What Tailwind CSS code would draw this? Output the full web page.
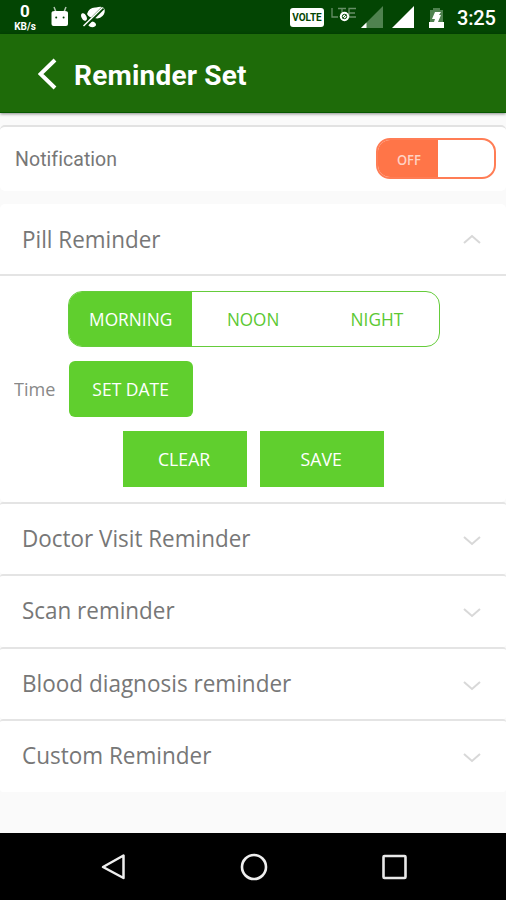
<!DOCTYPE html>
<html lang="en">
<head>
<meta charset="utf-8">
<title>Reminder Set</title>
<script src="https://cdn.jsdelivr.net/npm/@tailwindcss/browser@4"></script>
</head>
<body class="w-[506px] h-[900px] overflow-hidden bg-[#fafafa] flex flex-col font-['Open_Sans','Noto_Sans',sans-serif] text-[#777]">
  <!-- status bar -->
  <header class="h-[34px] shrink-0 bg-[#034503] flex items-center justify-between text-white font-[Roboto,sans-serif] pl-[12px] pr-[10px]">
    <div class="flex items-center">
      <div class="w-[26px] flex flex-col items-center font-bold">
        <span class="text-[17px] leading-[20px] font-bold">0</span>
        <span class="text-[10px] leading-[12px]">KB/s</span>
      </div>
      <svg class="ml-[12px]" width="20" height="22" viewBox="0 0 20 22"><path d="M4 1l2 5M16 1l-2 5" stroke="#fff" stroke-opacity=".7" stroke-width="1.5"/><path d="M1.500 7q0-2 3-2h10.500q3 0 3 2v11q0 2-2 2H3.500q-2 0-2-2z" fill="#fff"/><circle cx="6.200" cy="11.500" r="1" fill="#034503"/><circle cx="13.600" cy="11.500" r="1" fill="#034503"/></svg>
      <svg class="ml-[11px]" width="26" height="24" viewBox="0 0 26 24" fill="#fff"><path d="M6 9Q8 2 15 2.500q7-2 8.500 1.500 1 4-2 7-3 3.500-8 2Q8 13 6 9z"/><ellipse cx="3" cy="12" rx="2.500" ry="4" transform="rotate(-25 3 12)"/><path d="M7 20q3-5 6-3 3 2 1.500 4-4 3-7.500-1z"/><path d="M22 3L3 22" stroke="#034503" stroke-width="3.600"/><path d="M21.500 2.500L2.500 21" stroke="#fff" stroke-width="1.500"/></svg>
    </div>
    <div class="flex items-center">
      <div class="w-[34px] h-[19px] rounded-[3px] bg-white text-[#034503] text-[10px] leading-[19px] font-bold text-center">VOLTE</div>
      <svg class="ml-[7px]" width="26" height="24" viewBox="0 0 26 24"><path d="M1 3v9h6M7 3.500h8M11 3.500v9M25 3.500h-7v8.500h7M18 8h6" fill="none" stroke="#fff" stroke-opacity=".4" stroke-width="1.300"/><circle cx="13.500" cy="11.500" r="4.700" fill="#fff"/><circle cx="13.500" cy="11.500" r="2.200" stroke="#034503" stroke-width="1" fill="none"/><path d="M11.500 13.500l4-4" stroke="#034503" stroke-width=".8"/></svg>
      <svg class="ml-[4px]" width="22" height="22" viewBox="0 0 22 22"><path d="M22 0v22H0z" fill="#4f824f"/><path d="M5.500 16.500v5.500H0z" fill="#fff"/></svg>
      <svg class="ml-[9px]" width="22" height="22" viewBox="0 0 22 22"><path d="M22 0v22H0z" fill="#fff"/></svg>
      <svg class="ml-[15px]" width="15" height="21" viewBox="0 0 15 21"><path d="M1 3h3V1h7v2h3v13H1z" fill="#4f824f"/><path d="M0 15h5l1-3H3l3-7h6l-2 3h2l-3 7h6v6H0z" fill="#fff"/></svg>
      <span class="ml-[13px] w-[39px] text-[20px] leading-[34px] font-medium tracking-[-0.2px] whitespace-nowrap pt-[2px]">3:25</span>
    </div>
  </header>
  <!-- title bar -->
  <div class="h-[79px] shrink-0 bg-[#1e6b09] border-b border-[#075800] shadow-[0_1px_3px_rgba(0,0,0,0.45)] flex items-center pl-[38px] text-white font-[Roboto,sans-serif]">
    <svg class="mt-[2px]" width="19" height="32" viewBox="0 0 19 32"><path d="M17 2L2.500 16 17 30" fill="none" stroke="#fff" stroke-width="4"/></svg>
    <h1 class="ml-[17px] mt-[5px] text-[28px] leading-[32px] font-bold tracking-[0.2px] whitespace-nowrap">Reminder Set</h1>
  </div>
  <main class="flex flex-col h-[720px] shrink-0 pt-[12px]">
    <section class="h-[66px] shrink-0 bg-white rounded-[5px] border-t-2 border-[#e2e2e2] flex items-center justify-between pl-[15px] pr-[10px]">
      <span class="font-[Roboto,sans-serif] text-[19.5px] tracking-[0.05px] whitespace-nowrap pt-[1px]">Notification</span>
      <div class="w-[120px] h-[41px] mt-[-1px] rounded-[14px] border-2 border-[#ff7d55] overflow-hidden flex bg-white">
        <div class="w-[60px] bg-[#ff7548] text-[#ffd2c3] text-[15px] leading-[38px] text-center pl-[2px] font-semibold"><span class="inline-block scale-x-[0.86]">OFF</span></div>
      </div>
    </section>
    <section class="mt-[13px] flex flex-col bg-white rounded-[5px]">
      <div class="h-[72px] border-b-2 border-[#e4e4e4] flex items-center justify-between pl-[22px] pr-[25px]">
        <span class="text-[24px] origin-left scale-x-[0.935] whitespace-nowrap">Pill Reminder</span>
        <svg width="18" height="10" viewBox="0 0 18 10"><path d="M1 9l8-7 8 7" fill="none" stroke="#d8d8d8" stroke-width="2"/></svg>
      </div>
      <div class="h-[226px] pt-[15px] flex flex-col">
        <div class="ml-[68px] w-[372px] h-[56px] rounded-[14px] border-[1.5px] border-[#65cc3b] overflow-hidden flex text-[19px] leading-[54px] text-center text-[#5bc832]">
          <div class="w-[123px] bg-[#60cf2e] text-white"><span class="inline-block scale-x-[0.91]">MORNING</span></div>
          <div class="w-[124px]"><span class="inline-block scale-x-[0.9]">NOON</span></div>
          <div class="w-[124px]"><span class="inline-block scale-x-[0.91]">NIGHT</span></div>
        </div>
        <div class="mt-[14px] flex items-center pl-[14px]">
          <span class="w-[55px] text-[19px] origin-left scale-x-[0.95] text-[#888]">Time</span>
          <div class="w-[124px] h-[56px] rounded-[6px] bg-[#60cf2e] text-white text-[19px] leading-[57px] text-center"><span class="inline-block scale-x-[0.92]">SET DATE</span></div>
        </div>
        <div class="mt-[14px] flex gap-[13px] justify-center text-white text-[19px] leading-[57px] text-center">
          <div class="w-[124px] h-[56px] bg-[#60cf2e]"><span class="inline-block scale-x-[0.93]">CLEAR</span></div>
          <div class="w-[124px] h-[56px] bg-[#60cf2e]"><span class="inline-block scale-x-[0.93]">SAVE</span></div>
        </div>
      </div>
    </section>
    <section class="flex flex-col">
      <div class="h-[72px] bg-white border-t-2 border-[#e4e4e4] rounded-[3px] flex items-center justify-between pl-[22px] pr-[25px]">
        <span class="text-[24px] mt-[-2px] origin-left scale-x-[0.935] whitespace-nowrap">Doctor Visit Reminder</span>
        <svg class="mt-[4px]" width="18" height="10" viewBox="0 0 18 10"><path d="M1 1l8 7 8-7" fill="none" stroke="#d8d8d8" stroke-width="2"/></svg>
      </div>
      <div class="h-[73px] bg-white border-t-2 border-[#e4e4e4] rounded-[3px] flex items-center justify-between pl-[22px] pr-[25px]">
        <span class="text-[24px] mt-[-3px] origin-left scale-x-[0.935] whitespace-nowrap">Scan reminder</span>
        <svg class="mt-[3px]" width="18" height="10" viewBox="0 0 18 10"><path d="M1 1l8 7 8-7" fill="none" stroke="#d8d8d8" stroke-width="2"/></svg>
      </div>
      <div class="h-[72px] bg-white border-t-2 border-[#e4e4e4] rounded-[3px] flex items-center justify-between pl-[22px] pr-[25px]">
        <span class="text-[24px] mt-[-2px] origin-left scale-x-[0.938] whitespace-nowrap">Blood diagnosis reminder</span>
        <svg class="mt-[4px]" width="18" height="10" viewBox="0 0 18 10"><path d="M1 1l8 7 8-7" fill="none" stroke="#d8d8d8" stroke-width="2"/></svg>
      </div>
      <div class="h-[73px] bg-white border-t-2 border-[#e4e4e4] rounded-[3px] flex items-center justify-between pl-[22px] pr-[25px]">
        <span class="text-[24px] mt-[-3px] origin-left scale-x-[0.938] whitespace-nowrap">Custom Reminder</span>
        <svg class="mt-[3px]" width="18" height="10" viewBox="0 0 18 10"><path d="M1 1l8 7 8-7" fill="none" stroke="#d8d8d8" stroke-width="2"/></svg>
      </div>
    </section>
  </main>
  <!-- navigation bar -->
  <nav class="h-[67px] shrink-0 bg-black flex items-center justify-between pl-[101px] pr-[99px]">
    <svg width="25" height="28" viewBox="0 0 25 28"><path d="M22.500 2.500v22.500L2 14z" fill="none" stroke="#eee" stroke-width="2.500" stroke-linejoin="round"/></svg>
    <svg width="28" height="28" viewBox="0 0 28 28"><circle cx="14" cy="14" r="12" fill="none" stroke="#eee" stroke-width="2.600"/></svg>
    <svg width="25" height="26" viewBox="0 0 25 26"><rect x="1.500" y="2" width="22" height="22" rx="1" fill="none" stroke="#e8e8e8" stroke-width="2.600"/></svg>
  </nav>
</body>
</html>
